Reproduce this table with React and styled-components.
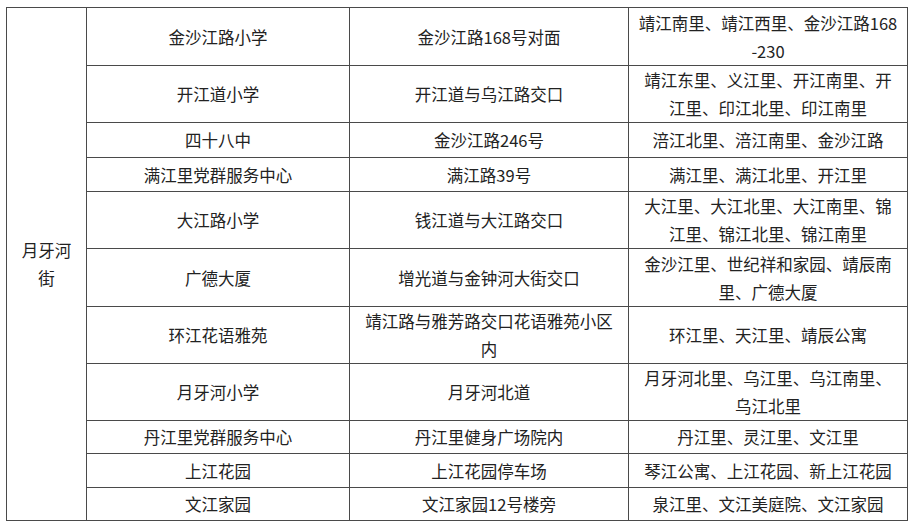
import React from "react";
import styled, { createGlobalStyle } from "styled-components";

const GlobalStyle = createGlobalStyle`
  html, body {
    margin: 0;
    padding: 0;
    background: #ffffff;
  }
  body {
    font-family: "Noto Sans CJK SC", "Noto Sans", sans-serif;
    color: #222222;
  }
`;

const Page = styled.div`
  padding: 7px 0 0 6px;
`;

const Table = styled.table`
  border-collapse: collapse;
  table-layout: fixed;
  width: 901px;
  font-size: 16.5px;
  line-height: 28px;
`;

const Col = styled.col`
  width: ${(p) => p.$w}px;
`;

const Row = styled.tr`
  height: ${(p) => p.$h}px;
`;

const Cell = styled.td`
  border: 1px solid #4a4a4a;
  padding: 0 ${(p) => (p.$narrow ? 10 : 8)}px;
  text-align: center;
  vertical-align: middle;
  word-break: break-all;
  line-break: anywhere;
  color: #222222;
`;

const widths = [80, 263, 279, 279];

const rows = [
  ["金沙江路小学", "金沙江路168号对面", "靖江南里、靖江西里、金沙江路168-230", 58],
  ["开江道小学", "开江道与乌江路交口", "靖江东里、义江里、开江南里、开江里、印江北里、印江南里", 57],
  ["四十八中", "金沙江路246号", "涪江北里、涪江南里、金沙江路", 35],
  ["满江里党群服务中心", "满江路39号", "满江里、满江北里、开江里", 34],
  ["大江路小学", "钱江道与大江路交口", "大江里、大江北里、大江南里、锦江里、锦江北里、锦江南里", 57],
  ["广德大厦", "增光道与金钟河大街交口", "金沙江里、世纪祥和家园、靖辰南里、广德大厦", 58],
  ["环江花语雅苑", "靖江路与雅芳路交口花语雅苑小区内", "环江里、天江里、靖辰公寓", 57],
  ["月牙河小学", "月牙河北道", "月牙河北里、乌江里、乌江南里、乌江北里", 57],
  ["丹江里党群服务中心", "丹江里健身广场院内", "丹江里、灵江里、文江里", 33],
  ["上江花园", "上江花园停车场", "琴江公寓、上江花园、新上江花园", 34],
  ["文江家园", "文江家园12号楼旁", "泉江里、文江美庭院、文江家园", 33],
];

export default function App() {
  return (
    <>
      <GlobalStyle />
      <Page>
        <Table>
          <colgroup>
            {widths.map((w, i) => (
              <Col key={i} $w={w} />
            ))}
          </colgroup>
          <tbody>
            {rows.map(([a, b, c, h], i) => (
              <Row key={i} $h={h}>
                {i === 0 && (
                  <Cell rowSpan={rows.length} $narrow>
                    月牙河街
                  </Cell>
                )}
                <Cell>{a}</Cell>
                <Cell>{b}</Cell>
                <Cell>{c}</Cell>
              </Row>
            ))}
          </tbody>
        </Table>
      </Page>
    </>
  );
}
